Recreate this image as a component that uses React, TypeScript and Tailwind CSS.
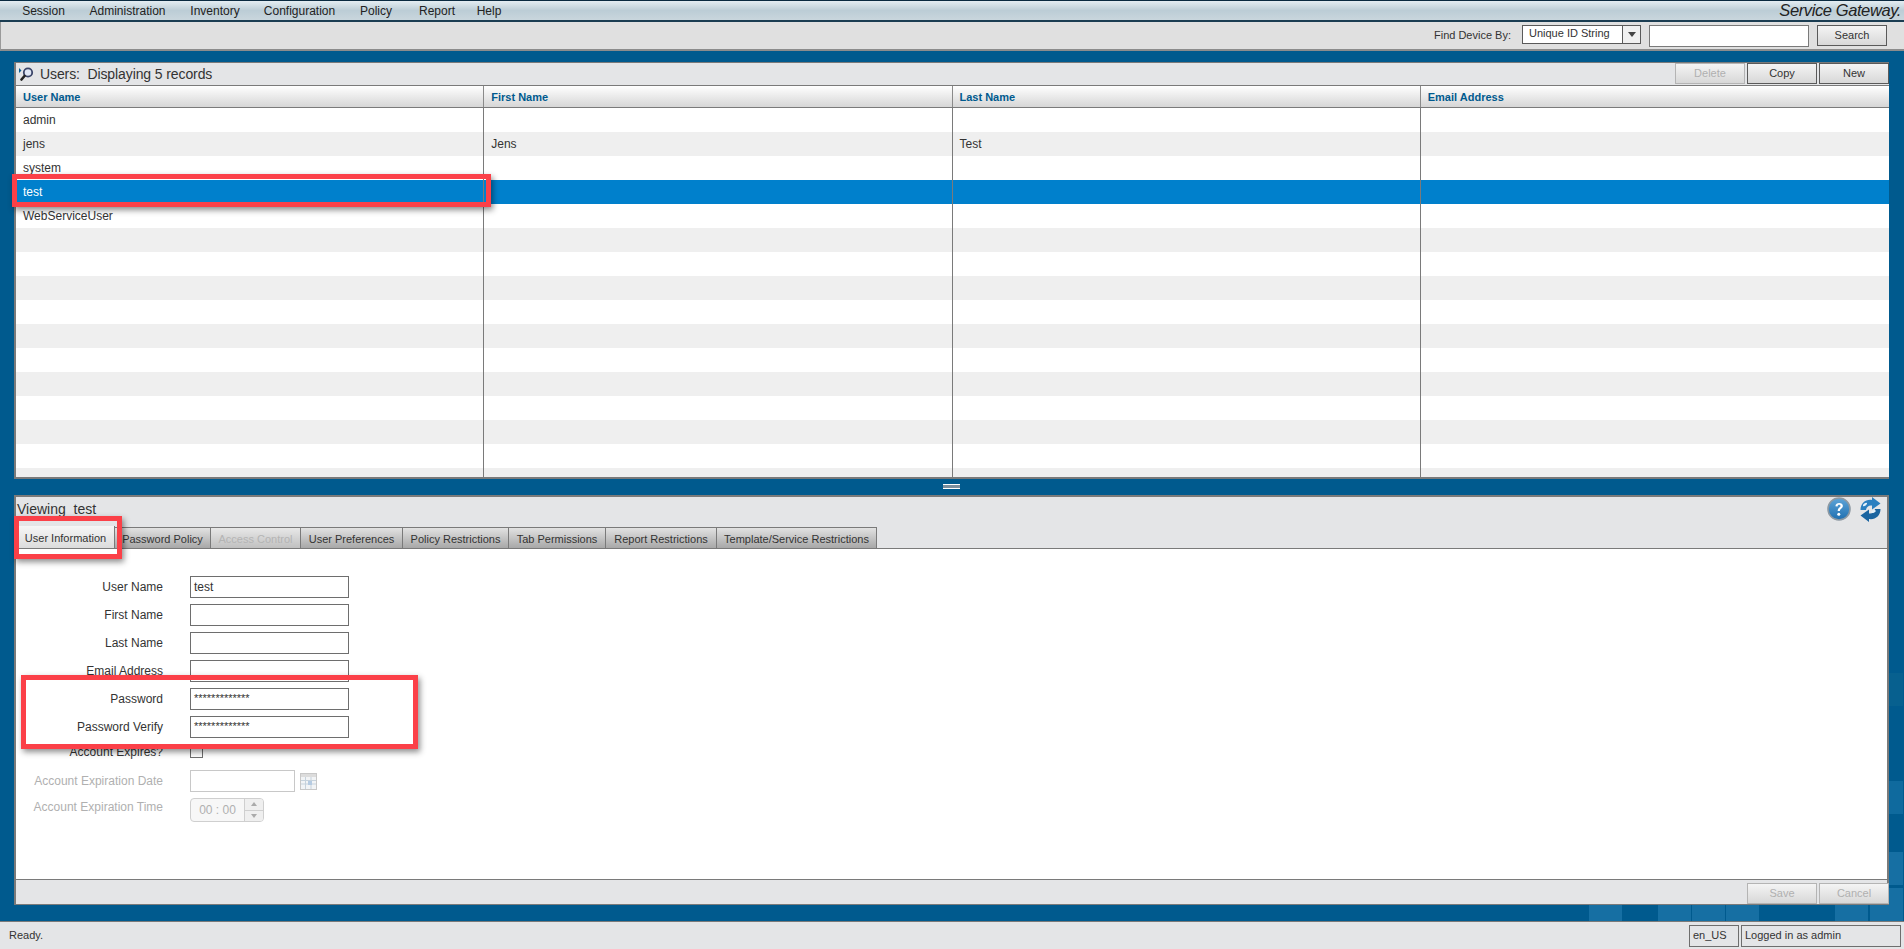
// App.tsx
import React from "react";

const font = { fontFamily: '"Liberation Sans", Arial, sans-serif' };

const menuItems = [
  { label: "Session", w: 67 },
  { label: "Administration", w: 101 },
  { label: "Inventory", w: 74 },
  { label: "Configuration", w: 95 },
  { label: "Policy", w: 58 },
  { label: "Report", w: 64 },
  { label: "Help", w: 40 },
];

const tabs = [
  { label: "Password Policy", w: 96 },
  { label: "Access Control", w: 90, disabled: true },
  { label: "User Preferences", w: 102 },
  { label: "Policy Restrictions", w: 106 },
  { label: "Tab Permissions", w: 97 },
  { label: "Report Restrictions", w: 111 },
  { label: "Template/Service Restrictions", w: 160 },
];

const rows = [
  ["admin", "", "", ""],
  ["jens", "Jens", "Test", ""],
  ["system", "", "", ""],
  ["test", "", "", ""],
  ["WebServiceUser", "", "", ""],
];

const columns = ["User Name", "First Name", "Last Name", "Email Address"];

// background tiles, bottom right of the blue area
const tiles = [
  { x: 1589, y: 888, o: "bg-[#166fa3]" },
  { x: 1658, y: 888, o: "bg-[#166fa3]" },
  { x: 1692, y: 888, o: "bg-[#166fa3]" },
  { x: 1726, y: 888, o: "bg-[#166fa3]" },
  { x: 1835, y: 888, o: "bg-[#166fa3]" },
  { x: 1870, y: 888, o: "bg-[#166fa3]" },
  { x: 1870, y: 852, o: "bg-[#166fa3]" },
  { x: 1870, y: 781, o: "bg-[#0f6a9e]" },
  { x: 1870, y: 673, o: "bg-[#07608f]" },
];

function Btn({ label, disabled, w = "w-[70px]" }: { label: string; disabled?: boolean; w?: string }) {
  return (
    <div
      className={`${w} h-[21px] flex items-center justify-center text-[11px] border bg-gradient-to-b from-[#f4f4f4] to-[#d8d8d8] ${
        disabled ? "border-[#b4b4b4] text-[#b0b0b0]" : "border-[#5a5a5a] text-[#333]"
      }`}
    >
      {label}
    </div>
  );
}

function Field({ label, value }: { label: string; value?: string }) {
  return (
    <div className="flex items-center h-[22px]">
      <div className="w-[147px] text-right text-[12px] text-[#333]">{label}</div>
      <div className="ml-[27px] w-[159px] h-[22px] border border-[#6e6e6e] bg-white px-[3px] flex items-center text-[12px] text-[#333]">
        {value}
      </div>
    </div>
  );
}

function PasswordField({ label }: { label: string }) {
  return (
    <div className="flex items-center h-[22px]">
      <div className="w-[147px] text-right text-[12px] text-[#333]">{label}</div>
      <div className="ml-[27px] w-[159px] h-[22px] border border-[#6e6e6e] bg-white px-[3px] flex items-start pt-[2px] text-[11px] leading-[14px] text-[#333]">
        *************
      </div>
    </div>
  );
}

function HelpIcon() {
  return (
    <svg width="24" height="24" viewBox="0 0 24 24">
      <defs>
        <linearGradient id="helpFill" x1="0" y1="0" x2="0" y2="1">
          <stop offset="0" stopColor="#5fa5d8" />
          <stop offset="1" stopColor="#1f6fb0" />
        </linearGradient>
      </defs>
      <circle cx="12" cy="12" r="11" fill="url(#helpFill)" stroke="#8d99a3" strokeWidth="1.6" />
      <path d="M8.4 9.2c.2-2.2 1.8-3.3 3.8-3.3 2.1 0 3.7 1.2 3.7 3 0 2.6-3 2.6-3 5h-2.2c0-3.2 2.8-3.2 2.8-4.8 0-.8-.6-1.3-1.4-1.3-.9 0-1.5.5-1.6 1.6z" fill="#fff" />
      <circle cx="11.8" cy="17.2" r="1.5" fill="#fff" />
    </svg>
  );
}

function RefreshIcon() {
  return (
    <svg width="23" height="25" viewBox="0 0 23 25">
      <path d="M1.500 13C1.500 6 7 2 13 3V0l8.500 6.500L13 12.500V8.500C10 8 7.500 9.500 7 13z" fill="#2a7fc0" />
      <path d="M21.500 12C21.500 19 16 23 10 22v3l-8.500-6.500L10 12.500v4c3 .5 5.500-1 6-4.500z" fill="#1a64a0" />
      <ellipse cx="6" cy="7.500" rx="2.400" ry="1.200" fill="#e3f1fa" transform="rotate(-35 6 7.500)" />
      <ellipse cx="14.500" cy="14.500" rx="2.400" ry="1.200" fill="#e3f1fa" transform="rotate(-20 14.500 14.500)" />
    </svg>
  );
}

function CalendarIcon() {
  return (
    <svg width="17" height="17" viewBox="0 0 17 17" className="ml-[5px]">
      <rect x="0.5" y="0.500" width="16" height="16" fill="#f2f4f6" stroke="#c8c8c8" />
      <rect x="1" y="1" width="15" height="3" fill="#dcdcdc" />
      <path d="M1 7.500h15M1 11h15M5.500 4v12M11 4v12" stroke="#c6d2dc" strokeWidth="1" />
      <rect x="8" y="8" width="4" height="4" fill="#b5cbe2" />
    </svg>
  );
}

function MagnifierIcon() {
  return (
    <svg width="15" height="14" viewBox="0 0 15 14">
      <path d="M0 1l2.500 2.500L0 6z" fill="#0a5d92" />
      <circle cx="9" cy="5.500" r="4.200" fill="#dfe6f4" stroke="#3a4468" strokeWidth="1.800" />
      <path d="M5.500 9L2.500 12.500" stroke="#222" strokeWidth="2.600" strokeLinecap="round" />
    </svg>
  );
}

export default function App() {
  const emptyRows = Array.from({ length: 11 });

  return (
    <div style={font} className="relative h-screen w-full overflow-hidden bg-[#005a8e] flex flex-col">
      {tiles.map((t) => (
        <div
          key={`${t.x}-${t.y}`}
          className={`absolute w-[33px] h-[33px] ${t.o}`}
          style={{ left: t.x, top: t.y }}
        />
      ))}

      {/* menu bar */}
      <div className="relative h-[22px] flex items-center pl-[10px] pr-[3px] border-t border-t-[#0a2a40] border-b-[2px] border-b-[#1b3d52] bg-gradient-to-b from-[#e4edf2] via-[#bccdd6] to-[#c9d6dd]">
        {menuItems.map((m) => (
          <div key={m.label} style={{ width: m.w }} className="text-center text-[12px] text-[#222] shrink-0">
            {m.label}
          </div>
        ))}
        <div className="ml-auto text-[16.5px] italic tracking-[-0.4px] text-[#222]">Service Gateway.</div>
      </div>

      {/* find device */}
      <div className="relative h-[29px] flex items-center justify-end pr-[17px] bg-[#e0e0e0] border-b-[2px] border-b-[#8c8c8c] border-l border-l-[#9a9a9a]">
        <span className="text-[11px] text-[#333] mr-[11px]">Find Device By:</span>
        <div className="flex h-[19px] w-[119px] border border-[#5a5a5a] bg-white mb-[3px]">
          <div className="flex-1 text-[11px] text-[#333] pl-[6px] leading-[15px]">Unique ID String</div>
          <div className="w-[18px] border-l border-[#5a5a5a] bg-[#f0f0f0] flex items-center justify-center">
            <div className="w-0 h-0 border-l-[4px] border-r-[4px] border-t-[5px] border-l-transparent border-r-transparent border-t-[#444]" />
          </div>
        </div>
        <div className="ml-[8px] w-[160px] h-[22px] border border-[#7a7a7a] bg-white" />
        <div className="ml-[8px]">
          <Btn label="Search" />
        </div>
      </div>

      {/* main area */}
      <div className="relative flex-1 flex flex-col pl-[14px] pr-[15px] pt-[11px] pb-[16px]">
        {/* users panel */}
        <div className="h-[417px] flex flex-col border-[2px] border-t-[1px] border-r-0 border-[#7a7a7a] bg-white overflow-hidden">
          <div className="h-[22px] flex items-center bg-[#e4e5e7] pl-[3px] shrink-0">
            <MagnifierIcon />
            <span className="ml-[6px] text-[14px] tracking-[-0.1px] text-[#333]">Users:&nbsp; Displaying 5 records</span>
            <div className="ml-auto flex gap-[2px] self-start">
              <Btn label="Delete" disabled />
              <Btn label="Copy" />
              <Btn label="New" />
            </div>
          </div>
          <div className="grid grid-cols-4 h-[23px] shrink-0 border-y border-[#7a7a7a] bg-gradient-to-b from-white to-[#d6d6d6]">
            {columns.map((c, i) => (
              <div
                key={c}
                className={`flex items-center pl-[7px] pt-[1px] text-[11px] font-bold text-[#005a8e] ${i < 3 ? "border-r border-[#8a8a8a]" : ""}`}
              >
                {c}
              </div>
            ))}
          </div>
          <div className="relative flex-1">
            {[...rows, ...emptyRows].map((_, i) => {
              const row = (rows[i] as string[] | undefined) ?? ["", "", "", ""];
              const selected = i === 3;
              return (
                <div
                  key={i}
                  className={`grid grid-cols-4 h-[24px] text-[12px] ${
                    selected ? "bg-[#0080cc] text-white" : i % 2 ? "bg-[#efefef] text-[#333]" : "bg-white text-[#333]"
                  }`}
                >
                  {row.map((cell, j) => (
                    <div key={j} className={`flex items-center pl-[7px] ${j < 3 ? "border-r border-[#7a7a7a]" : ""}`}>
                      {cell}
                    </div>
                  ))}
                </div>
              );
            })}
          </div>
        </div>

        {/* split handle */}
        <div className="h-[16px] flex items-center justify-center shrink-0 pb-[2px]">
          <div className="w-[17px] h-[5px] border-y border-white bg-[#7b8f9e]" />
        </div>

        {/* detail panel */}
        <div className="flex-1 flex flex-col border-[2px] border-[#7a7a7a] border-b-[1px] bg-[#e4e5e7]">
          <div className="h-[30px] flex items-start shrink-0">
            <span className="pl-[1px] text-[14px] leading-[24px] text-[#333]">Viewing&nbsp; test</span>
            <div className="ml-auto flex items-start gap-[8px] pr-[5px]">
              <HelpIcon />
              <RefreshIcon />
            </div>
          </div>
          <div className="flex items-end h-[22px] shrink-0 pl-[1px] border-b border-[#7a7a7a]">
            <div className="w-[98px] h-[22px] pt-[3px] flex items-center justify-center text-[11px] text-[#333] bg-gradient-to-b from-[#f6f6f6] to-[#dcdcdc] border-r border-[#7a7a7a]">
              User Information
            </div>
            {tabs.map((t) => (
              <div
                key={t.label}
                style={{ width: t.w }}
                className={`h-[21px] pt-[2px] flex items-center justify-center text-[11px] border-t border-r border-[#7a7a7a] bg-gradient-to-b ${
                  t.disabled ? "from-[#e8e8e8] to-[#c0c0c0] text-[#b4b4b4]" : "from-[#e2e2e2] to-[#a8a8a8] text-[#333]"
                }`}
              >
                {t.label}
              </div>
            ))}
          </div>

          <div className="flex-1 bg-white pt-[27px] border-b border-[#7a7a7a] flex flex-col gap-[6px] overflow-hidden">
            <Field label="User Name" value="test" />
            <Field label="First Name" />
            <Field label="Last Name" />
            <Field label="Email Address" />
            <PasswordField label="Password" />
            <PasswordField label="Password Verify" />
            <div className="flex items-center h-[16px]">
              <div className="w-[147px] text-right text-[12px] text-[#333]">Account Expires?</div>
              <div className="ml-[27px] w-[13px] h-[12px] border border-[#6e6e6e] bg-white" />
            </div>
            <div className="flex items-center h-[22px] mt-[4px]">
              <div className="w-[147px] text-right text-[12px] text-[#b0b0b0]">Account Expiration Date</div>
              <div className="ml-[27px] w-[105px] h-[22px] border border-[#c8c8c8] bg-white" />
              <CalendarIcon />
            </div>
            <div className="flex items-center h-[24px]">
              <div className="w-[147px] text-right text-[12px] text-[#b0b0b0] mb-[6px]">Account Expiration Time</div>
              <div className="ml-[27px] w-[74px] h-[24px] flex border border-[#cfcfcf] rounded-[4px] bg-[#f7f7f7] overflow-hidden">
                <div className="flex-1 flex items-center justify-center text-[12px] text-[#b0b0b0]">00 : 00</div>
                <div className="w-[19px] flex flex-col border-l border-[#cfcfcf] bg-[#efefef]">
                  <div className="flex-1 flex items-center justify-center border-b border-[#cfcfcf]">
                    <div className="w-0 h-0 border-l-[3px] border-r-[3px] border-b-[4px] border-l-transparent border-r-transparent border-b-[#aaa]" />
                  </div>
                  <div className="flex-1 flex items-center justify-center">
                    <div className="w-0 h-0 border-l-[3px] border-r-[3px] border-t-[4px] border-l-transparent border-r-transparent border-t-[#aaa]" />
                  </div>
                </div>
              </div>
            </div>
          </div>

          <div className="h-[24px] flex justify-end items-end gap-[2px] shrink-0 -mr-[2px]">
            <Btn label="Save" disabled />
            <Btn label="Cancel" disabled />
          </div>
        </div>
      </div>

      {/* status bar */}
      <div className="relative h-[28px] flex items-center bg-[#e4e5e7] border-t border-[#7a7a7a] pl-[9px] pr-[3px] gap-[2px] text-[11px] text-[#333] shrink-0">
        <span className="mr-auto">Ready.</span>
        <div className="w-[50px] h-[22px] border border-[#6e6e6e] pl-[3px] pt-[1px]">en_US</div>
        <div className="w-[160px] h-[22px] border border-[#6e6e6e] pl-[3px] pt-[1px]">Logged in as admin</div>
      </div>

      {/* red callouts lying over the screenshot */}
      <div className="absolute left-[12px] top-[174px] w-[479px] h-[33px] border-[5px] border-[#fb4048] shadow-[2px_3px_6px_rgba(0,0,0,0.45)]" />
      <div className="absolute left-[14px] top-[516px] w-[108px] h-[43px] border-[5px] border-[#fb4048] shadow-[2px_3px_6px_rgba(0,0,0,0.45)]" />
      <div className="absolute left-[21px] top-[675px] w-[397px] h-[74px] border-[5px] border-[#fb4048] shadow-[2px_3px_6px_rgba(0,0,0,0.45)]" />
    </div>
  );
}
